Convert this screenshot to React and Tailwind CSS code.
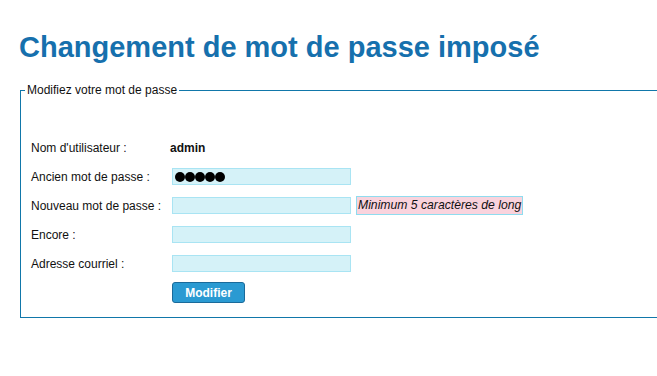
import React from "react";

function Field({ children }) {
  return (
    <div className="h-[17px] w-[179px] border border-[#a9e4f3] bg-[#d5f2f8] flex items-center px-[1px]">
      {children}
    </div>
  );
}

function Row({ label, children }) {
  return (
    <div className="flex items-center h-[17px]">
      <div className="w-[141px] shrink-0">{label}</div>
      {children}
    </div>
  );
}

export default function App() {
  return (
    <div
      className="w-[657px] h-[376px] overflow-hidden bg-white text-[#111]"
      style={{ fontFamily: '"Liberation Sans", Arial, sans-serif' }}
    >
      <h1 className="ml-[19px] pt-[31px] text-[29px] leading-[33px] font-bold text-[#1670ad]">
        Changement de mot de passe imposé
      </h1>
      <fieldset className="mt-[19px] ml-[20px] w-[700px] border border-[#1177aa] pl-[4px] pb-[14px]">
        <legend className="px-[2px] text-[12px] leading-[14px]">Modifiez votre mot de passe</legend>
        <div className="ml-[6px] pt-[42px] flex flex-col gap-[12px] text-[12px]">
          <Row label="Nom d'utilisateur :">
            <span className="-ml-[2px] font-bold">admin</span>
          </Row>
          <Row label="Ancien mot de passe :">
            <Field>
              <div className="flex gap-[0px] pl-[1px]">
                {[0, 1, 2, 3, 4].map((i) => (
                  <span key={i} className="w-[10px] h-[10px] rounded-full bg-black" />
                ))}
              </div>
            </Field>
          </Row>
          <Row label="Nouveau mot de passe :">
            <Field />
            <div className="ml-[5px] h-[19px] border border-[#8fdcef] bg-[#f9d3dd] px-[1px] flex items-center italic text-[12.2px]">
              Minimum 5 caractères de long
            </div>
          </Row>
          <Row label="Encore :">
            <Field />
          </Row>
          <Row label="Adresse courriel :">
            <Field />
          </Row>
          <div className="flex">
            <div className="w-[141px] shrink-0" />
            <button className="-mt-[2px] w-[73px] h-[21px] rounded-[3px] border border-[#1a6a9a] bg-[#2a9ad2] text-white font-bold text-[12px] leading-none">
              Modifier
            </button>
          </div>
        </div>
      </fieldset>
    </div>
  );
}
